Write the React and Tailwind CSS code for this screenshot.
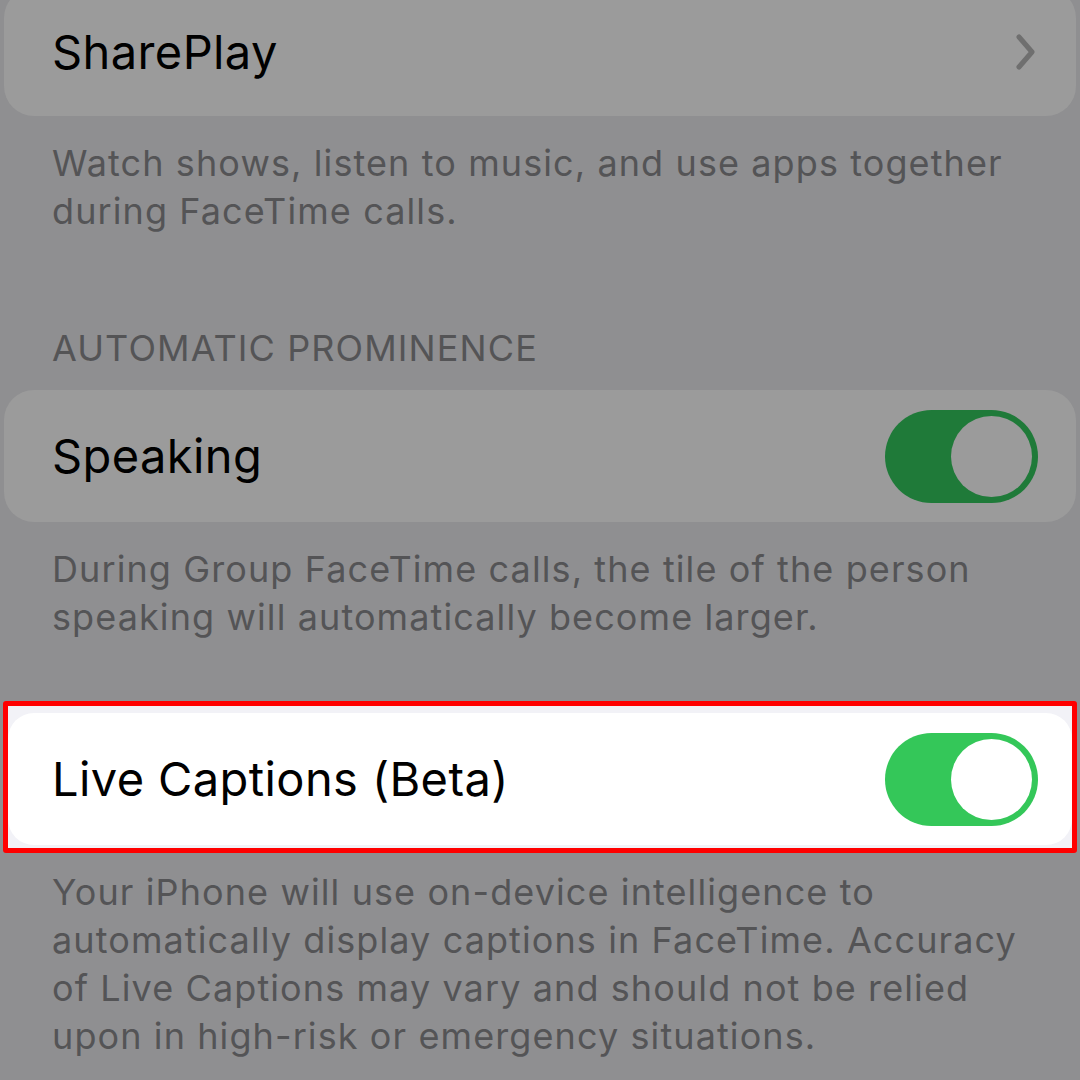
import React from 'react';

const font = { fontFamily: 'Inter, "Liberation Sans", sans-serif' };

function Toggle({ dim }) {
  return (
    <div
      className={`w-[153px] h-[93px] rounded-full flex items-center justify-end pr-[6px] shrink-0 ${
        dim ? 'bg-[#1f7a39]' : 'bg-[#34c759]'
      }`}
    >
      <div className={`w-[81px] h-[81px] rounded-full ${dim ? 'bg-[#9b9b9b]' : 'bg-white'}`} />
    </div>
  );
}

function Footer({ lines, className = '' }) {
  return (
    <div className={`px-[52px] text-[36px] leading-[48px] text-[#545456] tracking-[1.1px] ${className}`}>
      {lines.map((l) => (
        <p key={l}>{l}</p>
      ))}
    </div>
  );
}

export default function App() {
  return (
    <div className="w-[1080px] h-[1080px] overflow-hidden bg-[#8f8f91]" style={font}>
      <div className="mx-[4px] -mt-[12px] h-[128px] rounded-[30px] bg-[#9b9b9b] flex items-center justify-between pl-[48px] pr-[39px]">
        <span className="text-[47px] tracking-[0.4px] text-black">SharePlay</span>
        <svg width="22" height="38" viewBox="0 0 22 38">
          <path d="M4 4 L17 19 L4 34" fill="none" stroke="#6f6f6f" strokeWidth="5" strokeLinecap="round" strokeLinejoin="round" />
        </svg>
      </div>

      <Footer
        className="pt-[23px]"
        lines={['Watch shows, listen to music, and use apps together', 'during FaceTime calls.']}
      />

      <p className="px-[52px] mt-[89px] text-[36px] leading-[48px] text-[#545456] tracking-[1.1px]">
        AUTOMATIC PROMINENCE
      </p>

      <div className="mx-[4px] mt-[18px] h-[132px] rounded-[30px] bg-[#9b9b9b] flex items-center justify-between pl-[48px] pr-[38px]">
        <span className="text-[47px] tracking-[0.4px] text-black">Speaking</span>
        <Toggle dim />
      </div>

      <Footer
        className="pt-[23px]"
        lines={['During Group FaceTime calls, the tile of the person', 'speaking will automatically become larger.']}
      />

      <div className="mx-[3px] mt-[60px] border-[5px] border-[#ff0000] rounded-[3px] bg-[#f2f2f7] pt-[7px] pb-[3px] overflow-hidden">
        <div className="h-[132px] rounded-[26px] bg-white flex items-center justify-between pl-[44px] pr-[34px]">
          <span className="text-[47px] tracking-[0.4px] text-black">Live Captions (Beta)</span>
          <Toggle />
        </div>
      </div>

      <Footer
        className="pt-[15px]"
        lines={[
          'Your iPhone will use on-device intelligence to',
          'automatically display captions in FaceTime. Accuracy',
          'of Live Captions may vary and should not be relied',
          'upon in high-risk or emergency situations.',
        ]}
      />
    </div>
  );
}
